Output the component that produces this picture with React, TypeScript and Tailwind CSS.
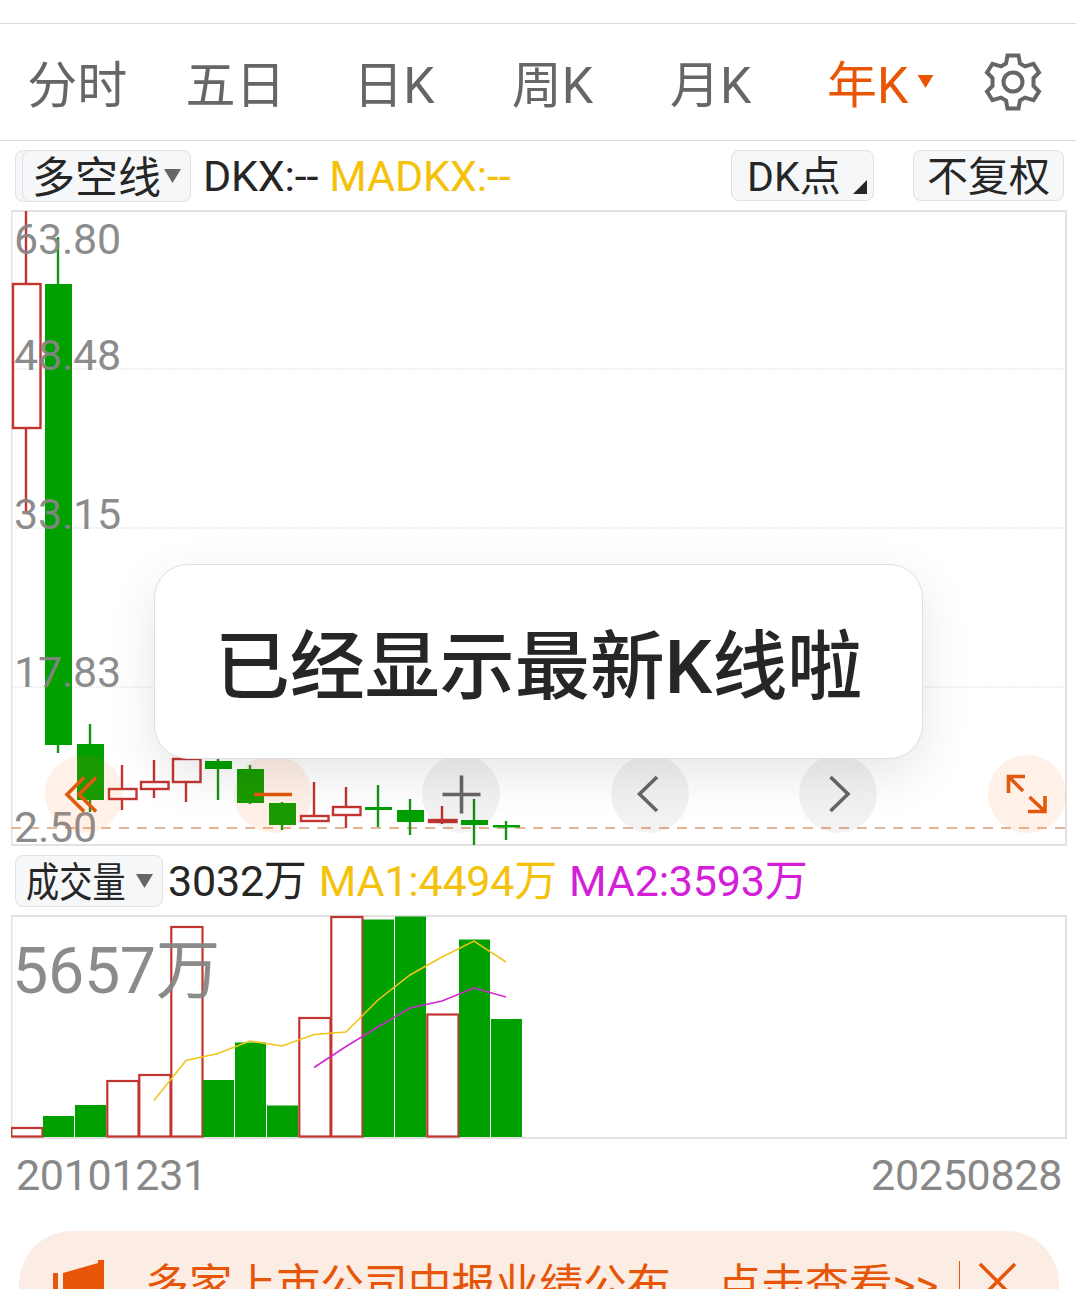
import React from 'react';

interface Candle {
  up: boolean;
  open: number;
  close: number;
  high: number;
  low: number;
}

const TABS = ['分时', '五日', '日K', '周K', '月K', '年K'];

// one candle per year, values are y positions inside the price chart
const CANDLES: Candle[] = [
  { up: true, open: 73, close: 219, high: 1, low: 302 },
  { up: false, open: 74, close: 535, high: 27, low: 543 },
  { up: false, open: 534, close: 590, high: 514, low: 602 },
  { up: true, open: 578, close: 590, high: 555, low: 600 },
  { up: true, open: 571, close: 580, high: 550, low: 588 },
  { up: true, open: 548, close: 573, high: 540, low: 592 },
  { up: false, open: 551, close: 559, high: 549, low: 590 },
  { up: false, open: 559, close: 593, high: 555, low: 594 },
  { up: false, open: 593, close: 615, high: 592, low: 620 },
  { up: true, open: 605, close: 612, high: 572, low: 612 },
  { up: true, open: 596, close: 606, high: 577, low: 618 },
  { up: false, open: 597, close: 600, high: 575, low: 617 },
  { up: false, open: 600, close: 612, high: 589, low: 625 },
  { up: true, open: 609, close: 613, high: 596, low: 614 },
  { up: false, open: 610, close: 615, high: 589, low: 635 },
  { up: false, open: 615, close: 617.5, high: 611, low: 630 },
];

const PRICES = [
  { label: '63.80', y: 43.5 },
  { label: '48.48', y: 159.5 },
  { label: '33.15', y: 318.5 },
  { label: '17.83', y: 476.5 },
  { label: '2.50', y: 631.5 },
];

const VOLUMES = [
  { up: true, top: 212 },
  { up: false, top: 201 },
  { up: false, top: 190 },
  { up: true, top: 165 },
  { up: true, top: 159 },
  { up: true, top: 11 },
  { up: false, top: 165 },
  { up: false, top: 127.5 },
  { up: false, top: 190.5 },
  { up: true, top: 102 },
  { up: true, top: 1 },
  { up: false, top: 4.5 },
  { up: false, top: 1.5 },
  { up: true, top: 98.5 },
  { up: false, top: 24.5 },
  { up: false, top: 104 },
];

const MA1 = '143,185.5 175,145.5 207,138.5 239,126 271,131 303,119.5 335,117 367,85 399,60 431,42 463,26 495,47';
const MA2 = '303,152.5 335,131.5 367,112 399,93 431,86 463,73 495,82';

const Triangle = ({ className }: { className: string }) => (
  <svg className={className} viewBox="0 0 17 14">
    <path d="M0 0H17L8.5 14Z" fill="currentColor" />
  </svg>
);

const GearIcon = () => (
  <svg className="h-[60px] w-[60px] text-[#666]" viewBox="0 0 60 60" fill="none" stroke="currentColor" strokeWidth="4">
    <path d="M24.5 3.5H35.5L37 11.5L42 14.4L50.5 11.8L56 20.5L50.5 26V34L56 39.5L50.5 48.2L42 45.6L37 48.5L35.5 56.5H24.5L23 48.5L18 45.6L9.5 48.2L4 39.5L9.5 34V26L4 20.5L9.5 11.8L18 14.4L23 11.5Z" />
    <circle cx="30" cy="30" r="9.5" />
  </svg>
);

const PriceChart = () => (
  <svg className="block h-[636px] w-[1056px]" viewBox="0 0 1056 636">
    <path d="M0.5 1V635M0 1H1056M0 635H1056M1055 1V635" stroke="#e2e2e2" strokeWidth="2" />
    {[159, 318, 477].map((y) => (
      <line key={y} x1="1" x2="1054" y1={y} y2={y} stroke="#ececec" strokeWidth="1.5" strokeDasharray="2 1" />
    ))}
    <line x1="0" x2="1055" y1="618" y2="618" stroke="#e3b697" strokeWidth="2" strokeDasharray="10 8" />
    {CANDLES.map((c, i) => {
      const x = 15 + i * 32;
      const color = c.up ? '#c23531' : '#00a000';
      return c.up ? (
        <g key={i} stroke={color} strokeWidth="2.4" fill="none">
          <path d={`M${x} ${c.high}V${c.open}M${x} ${c.close}V${c.low}`} />
          <rect
            x={x - 13}
            y={c.open + 1}
            width="27.5"
            height={c.close - c.open - 2}
            fill={i === 13 ? color : 'none'}
          />
        </g>
      ) : (
        <g key={i} fill={color}>
          <rect x={x - 1.2} y={c.high} width="2.4" height={c.low - c.high} fill="#149414" />
          <rect x={x - 13} y={c.open} width="27" height={c.close - c.open} />
        </g>
      );
    })}
    {PRICES.map((p) => (
      <text key={p.label} x="3" y={p.y} fontSize="43" letterSpacing="-0.2" fill="#858585" fillOpacity="0.95">
        {p.label}
      </text>
    ))}
  </svg>
);

const VolumeChart = () => (
  <svg className="block h-[224px] w-[1056px]" viewBox="0 0 1056 224">
    <path d="M0.5 1V223M0 1H1056M0 223H1056M1055 1V223" stroke="#e2e2e2" strokeWidth="2" />
    {VOLUMES.map((v, i) =>
      v.up ? (
        <rect
          key={i}
          x={i * 32 + 0.3}
          y={v.top + 1}
          width="31.2"
          height={220.5 - v.top}
          fill="none"
          stroke="#c23531"
          strokeWidth="2.2"
        />
      ) : (
        <rect key={i} x={i * 32} y={v.top} width="31" height={222 - v.top} fill="#00a000" />
      )
    )}
    <polyline points={MA1} fill="none" stroke="#f0c419" strokeWidth="1.5" />
    <polyline points={MA2} fill="none" stroke="#d028d0" strokeWidth="1.5" />
    <text x="1" y="78" fontSize="64.5" letterSpacing="-0.3" fill="#858585" fillOpacity="0.95">
      5657万
    </text>
  </svg>
);

const CONTROLS = [
  { name: 'first', accent: true, d: 'M39 22.5L22 39.5L39 56.5M51 22.5L34 39.5L51 56.5' },
  { name: 'minus', accent: true, d: 'M20 39.5H58' },
  { name: 'plus', accent: false, d: 'M20.5 39.5H58.5M39.5 20.5V58.5' },
  { name: 'prev', accent: false, d: 'M46 22L28.5 39L46 56' },
  { name: 'next', accent: false, d: 'M31.5 22L49 39L31.5 56' },
  { name: 'expand', accent: true, d: 'M20.5 38V21.5H37M20.5 21.5L35 36M57 41V56.5H40M57 56.5L41.5 42' },
];

const ChartControls = () => (
  <div className="absolute top-[545px] left-[34px] flex w-[1021px] justify-between">
    {CONTROLS.map((c) => (
      <button
        key={c.name}
        aria-label={c.name}
        className={`h-[78px] w-[78px] rounded-full ${c.accent ? 'bg-[#ff6a1a]/10 text-[#e2590c]' : 'bg-black/5 text-[#666]'}`}
      >
        <svg viewBox="0 0 78 78" fill="none" stroke="currentColor" strokeWidth="3.6">
          <path d={c.d} />
        </svg>
      </button>
    ))}
  </div>
);

export default function App() {
  return (
    <div className="h-[1289px] w-[1076px] overflow-hidden bg-white pt-[23px] font-['Roboto','Noto_Sans_CJK_SC',sans-serif] text-[#262626]">
      <nav className="flex h-[118px] items-center border-y border-[#d9d9d9] text-[50px] leading-none text-[#666]">
        {TABS.map((tab, i) => (
          <button
            key={tab}
            className={`relative h-[60px] w-[158.4px] pt-[4px] leading-[60px] whitespace-nowrap ${i === 5 ? 'pr-[7px] text-[#ea5504]' : 'pr-[4px]'}`}
          >
            {tab}
            {i === 5 && <Triangle className="absolute top-[23px] left-[125px] h-[13px] w-[17px]" />}
          </button>
        ))}
        <div className="flex flex-1 justify-center">
          <GearIcon />
        </div>
      </nav>

      <div className="flex h-[69px] items-start pt-[9px] pl-[15px] text-[43px] leading-[50px] whitespace-nowrap">
        <div className="h-[52px] w-[176px] rounded-lg border border-[#dfe1e4] bg-[#f6f7f9] pl-[6px]">
          <button className="-my-px flex h-[52px] w-[169px] items-center rounded-lg border border-[#dfe1e4] bg-[#f6f7f9] pl-[9px]">
            <span className="pt-[3px]">多空线</span>
            <Triangle className="ml-[3px] h-[14px] w-[17px] text-[#666]" />
          </button>
        </div>
        <span className="ml-[12px] pt-px tracking-[-0.2px]">DKX:--</span>
        <span className="ml-[11px] pt-px tracking-[-0.1px] text-[#f5c20b]">MADKX:--</span>
        <button className="relative mr-[39px] ml-auto h-[51px] w-[143px] rounded-lg border border-[#dfe1e4] bg-[#f6f7f9] pt-px pl-[15px] text-left text-[41px]">
          DK点
          <svg className="absolute right-[6px] bottom-[6px] h-[14px] w-[14px]" viewBox="0 0 14 14">
            <path d="M14 0V14H0Z" fill="currentColor" />
          </svg>
        </button>
        <button className="mr-[12px] h-[51px] w-[151px] rounded-lg border border-[#dfe1e4] bg-[#f6f7f9] pt-px text-[41px]">
          不复权
        </button>
      </div>

      <div className="relative ml-[11px] w-[1056px]">
        <PriceChart />
        <ChartControls />
        <div className="absolute top-[354px] left-[143px] flex h-[195px] w-[769px] items-center justify-center rounded-[34px] border border-[#dedede] bg-white pt-[11px] text-[75px] font-medium whitespace-nowrap shadow-[0_16px_50px_rgba(0,0,0,0.1)]">
          已经显示最新K线啦
        </div>
      </div>

      <div className="flex h-[69px] items-start pt-[9px] pl-[15px] text-[43px] leading-[50px] whitespace-nowrap">
        <button className="flex h-[52px] w-[148px] items-center rounded-lg border border-[#dfe1e4] bg-[#f6f7f9] pl-[10px] text-[41px]">
          <span className="w-[100px] origin-left scale-x-[0.81] pt-[3px] text-left">成交量</span>
          <Triangle className="ml-[10px] h-[14px] w-[17px] text-[#666]" />
        </button>
        <span className="ml-[5px] pt-px tracking-[-0.2px]">3032万</span>
        <span className="ml-[12px] pt-px tracking-[-0.2px] text-[#f5c20b]">MA1:4494万</span>
        <span className="ml-[12px] pt-px tracking-[-0.2px] text-[#d41fd8]">MA2:3593万</span>
      </div>

      <div className="ml-[11px]">
        <VolumeChart />
      </div>

      <div className="flex h-[92px] justify-between pt-[11px] pr-[14px] pl-[16px] text-[43px] leading-[50px] tracking-[-0.3px] text-[#888]">
        <span>20101231</span>
        <span>20250828</span>
      </div>

      <div className="ml-[19px] flex h-[106px] w-[1040px] items-center rounded-full bg-[#fcede4] text-[43.8px] leading-[50px] whitespace-nowrap text-[#e65508]">
        <svg className="mb-[4px] ml-[34px] h-[50px] w-[51px]" viewBox="0 0 51 50" fill="currentColor">
          <path d="M0 16H5V40H0ZM10 16L45 6V3H51V47H45L10 40Z" />
        </svg>
        <span className="ml-[41px] pt-[4px]">多家上市公司中报业绩公布，</span>
        <span className="ml-[3px] pt-[4px]">点击查看&gt;&gt;</span>
        <span className="ml-auto h-[46px] w-px bg-[#e65508]" />
        <svg className="mr-[42px] mb-[4px] ml-[17px] h-[40px] w-[40px]" viewBox="0 0 40 40" stroke="currentColor" strokeWidth="3.5">
          <path d="M3 2L38 37M38 2L3 37" />
        </svg>
      </div>
    </div>
  );
}
